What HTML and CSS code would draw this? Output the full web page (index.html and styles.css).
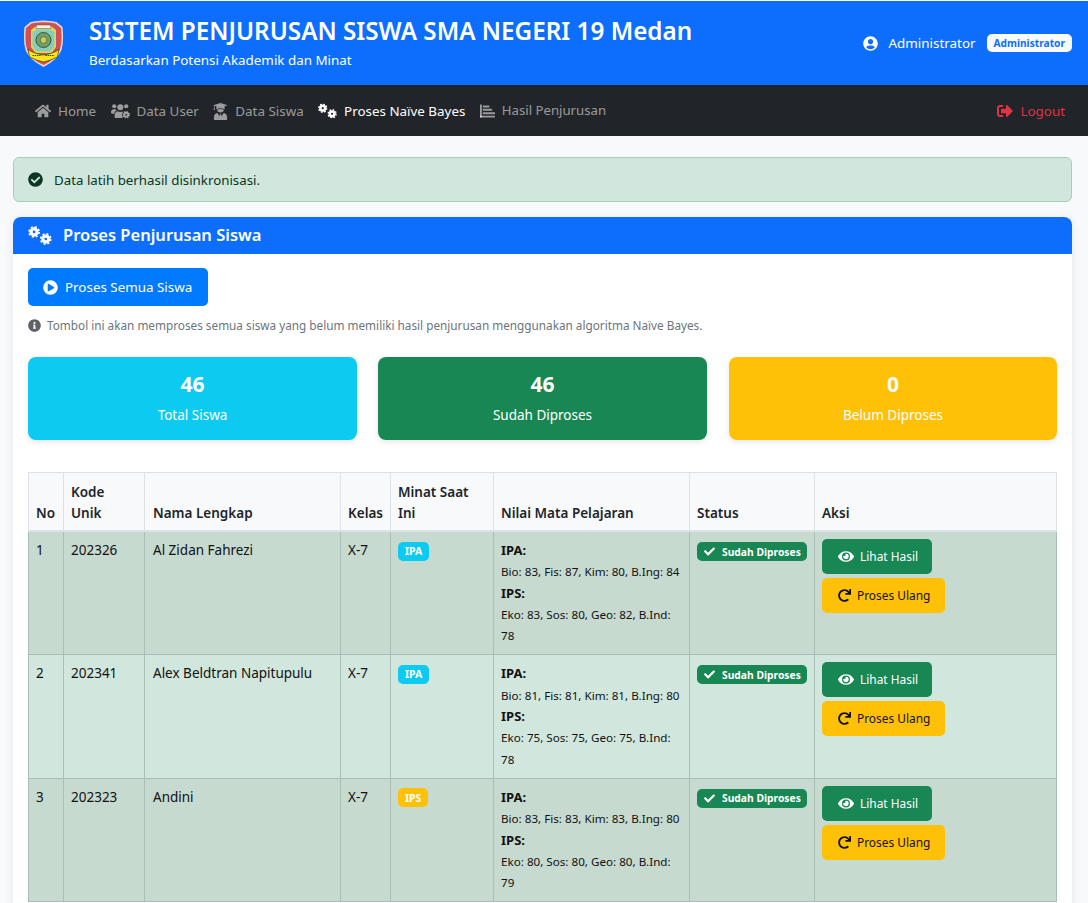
FILE: index.html
```html
<!DOCTYPE html>
<html lang="id">
<head>
<meta charset="utf-8">
<title>Sistem Penjurusan Siswa</title>
<link rel="stylesheet" href="styles.css">
</head>
<body>
<svg class="defs" width="0" height="0" aria-hidden="true">
  <defs>
    <symbol id="gear" viewBox="0 0 24 24">
      <circle cx="12" cy="12" r="6" fill="none" stroke="currentColor" stroke-width="6.5" />
      <circle cx="12" cy="12" r="10.2" fill="none" stroke="currentColor" stroke-width="3.6" stroke-dasharray="4.2 3.81" />
    </symbol>
    <symbol id="cogs" viewBox="0 0 640 512">
      <use href="#gear" x="0" y="0" width="320" height="320" />
      <use href="#gear" x="315" y="190" width="320" height="320" />
    </symbol>
    <symbol id="check" viewBox="0 0 512 512"><path fill="currentColor" d="M173.898 439.404l-166.4-166.4c-9.997-9.997-9.997-26.206 0-36.204l36.203-36.204c9.997-9.998 26.207-9.998 36.204 0L192 312.69 432.095 72.596c9.997-9.997 26.207-9.997 36.204 0l36.203 36.204c9.997 9.997 9.997 26.206 0 36.204l-294.4 294.401c-9.998 9.997-26.207 9.997-36.204-.001z"/></symbol>
    <symbol id="eye" viewBox="0 0 576 512"><path fill="currentColor" d="M572.52 241.4C518.29 135.59 410.93 64 288 64S57.68 135.64 3.48 241.41a32.35 32.35 0 0 0 0 29.19C57.71 376.41 165.07 448 288 448s230.32-71.64 284.52-177.41a32.35 32.35 0 0 0 0-29.19zM288 400a144 144 0 1 1 144-144 143.93 143.93 0 0 1-144 144zm0-240a95.31 95.31 0 0 0-25.31 3.79 47.85 47.85 0 0 1-66.9 66.9A95.78 95.78 0 1 0 288 160z"/></symbol>
    <symbol id="redo" viewBox="0 0 512 512"><path fill="currentColor" d="M500.33 0h-47.41a12 12 0 0 0-12 12.57l4 82.76A247.42 247.42 0 0 0 256 8C119.34 8 7.9 119.53 8 256.19 8.1 393.07 119.1 504 256 504a247.1 247.1 0 0 0 166.18-63.91 12 12 0 0 0 .48-17.43l-34-34a12 12 0 0 0-16.38-.55A176 176 0 1 1 402.1 157.8l-101.53-4.87a12 12 0 0 0-12.57 12v47.41a12 12 0 0 0 12 12h200.33a12 12 0 0 0 12-12V12a12 12 0 0 0-12-12z"/></symbol>
  </defs>
</svg>

<header class="topbar">
  <div class="brand">
    <svg class="logo" viewBox="0 0 40 47" aria-hidden="true">
      <path d="M7 2 Q20 -1 33 2 L39 7 Q40.5 22 38 30 Q34 40 20 47 Q6 40 2 30 Q-.5 22 1 7Z" fill="#e9d3d6"/>
      <path d="M8 3.5 Q20 1 32 3.5 L37.5 8 Q39 22 36.5 29 Q33 39 20 45 Q7 39 3.5 29 Q1 22 2.5 8Z" fill="#d2504f"/>
      <path d="M12 6.5 H28 L32.5 10 V27 L28 33 H12 L7.5 27 V10Z" fill="#e3d94a"/>
      <path d="M13 9.5 H27 L31 12 V26 L27 31.5 H13 L9 26 V12Z" fill="#86cdbd"/>
      <path d="M13 5 H27 L27.5 8.5 H12.5Z" fill="#f6f1e4" stroke="#5a5a30" stroke-width=".5"/>
      <circle cx="20" cy="20" r="7.5" fill="#74a063" stroke="#33593f" stroke-width="1"/>
      <circle cx="20" cy="20" r="3.4" fill="#cdc95a" stroke="#33593f" stroke-width=".7"/>
      <path d="M4.5 29 Q8 33 20 35 Q32 33 35.5 29 L34 37 Q26 41 20 42 Q14 41 6 37Z" fill="#f6e61a" stroke="#3e3a10" stroke-width=".7"/>
      <path d="M9 35.5 H18 M22 35.5 H31" stroke="#3e3a10" stroke-width="1.2" stroke-dasharray="1.4 .8"/>
    </svg>
    <div class="brand-text">
      <h1 class="brand-title">SISTEM PENJURUSAN SISWA SMA NEGERI 19 Medan</h1>
      <p class="brand-sub">Berdasarkan Potensi Akademik dan Minat</p>
    </div>
  </div>
  <div class="user">
    <svg class="ico ico-user" viewBox="0 0 496 512" aria-hidden="true"><path fill="currentColor" d="M248 8C111 8 0 119 0 256s111 248 248 248 248-111 248-248S385 8 248 8zm0 96c48.6 0 88 39.4 88 88s-39.4 88-88 88-88-39.4-88-88 39.4-88 88-88zm0 344c-58.7 0-111.3-26.6-146.5-68.2 18.8-35.4 55.6-59.8 98.5-59.8 2.4 0 4.8.4 7.1 1.1 13 4.2 26.6 6.9 40.9 6.9 14.3 0 28-2.7 40.9-6.9 2.3-.7 4.7-1.1 7.1-1.1 42.9 0 79.7 24.4 98.5 59.8C359.3 421.4 306.7 448 248 448z"/></svg>
    <span class="user-name">Administrator</span>
    <span class="user-badge">Administrator</span>
  </div>
</header>

<nav class="navbar">
  <ul class="nav-list">
    <li><a class="nav-link"><svg class="ico" viewBox="0 0 576 512" aria-hidden="true"><path fill="currentColor" d="M280.37 148.26L96 300.11V464a16 16 0 0 0 16 16l112.06-.29a16 16 0 0 0 15.92-16V368a16 16 0 0 1 16-16h64a16 16 0 0 1 16 16v95.64a16 16 0 0 0 16 16.05L464 480a16 16 0 0 0 16-16V300L295.67 148.26a12.19 12.19 0 0 0-15.3 0zM571.6 251.47L488 182.56V44.05a12 12 0 0 0-12-12h-56a12 12 0 0 0-12 12v72.61L318.47 43a48 48 0 0 0-61 0L4.34 251.47a12 12 0 0 0-1.6 16.9l25.5 31A12 12 0 0 0 45.15 301l235.22-193.74a12.19 12.19 0 0 1 15.3 0L530.9 301a12 12 0 0 0 16.9-1.6l25.5-31a12 12 0 0 0-1.7-16.93z"/></svg>Home</a></li>
    <li><a class="nav-link"><svg class="ico ico-users" viewBox="0 0 20 16" aria-hidden="true"><g fill="currentColor"><circle cx="3.4" cy="3" r="2.2"/><circle cx="16" cy="3" r="2.2"/><circle cx="9.8" cy="4" r="3.2"/><path d="M0 9.6q0-3.4 3-3.4h1.6q1 .4 1.4 1Q3.6 8.4 3.4 10.8H1q-1 0-1-1.2zM4.8 15.4q-1 0-1-1v-1.6q0-4 3.2-4.6 2.8 1.4 5.4.3v1.4q-1.6 1.6-.2 3.8v1.7z"/></g><use href="#gear" x="12" y="8" width="8" height="8"/></svg>Data User</a></li>
    <li><a class="nav-link"><svg class="ico ico-grad" viewBox="0 0 16 18" aria-hidden="true"><g fill="currentColor"><path d="M8 0 15.6 2.4 12.4 3.4V6.6Q10.6 5.4 8 5.4T3.6 6.6V3.4L1.6 2.8V5L2.2 7H.4L1 5V2.5L.4 2.4z"/><path d="M4.4 6.8Q8 5.7 11.6 6.8 11.4 10 8 10T4.4 6.8z"/><path d="M1 18v-3q0-3.6 3.6-4.4L7 14l.5-2.5h1L9 14l2.4-3.4Q15 11.4 15 15v3z"/></g></svg>Data Siswa</a></li>
    <li><a class="nav-link nav-active"><svg class="ico ico-cogs" aria-hidden="true"><use href="#cogs"/></svg>Proses Naïve Bayes</a></li>
    <li><a class="nav-link nav-hasil"><svg class="ico ico-chart" viewBox="0 0 16 14" aria-hidden="true"><g fill="currentColor"><rect x="0" y="0" width="2" height="14" rx=".4"/><rect x="0" y="12" width="16" height="2" rx=".4"/><rect x="3" y="1" width="7" height="2.2" rx=".3"/><rect x="3" y="4.6" width="10" height="2.2" rx=".3"/><rect x="3" y="8.2" width="13" height="2.2" rx=".3"/></g></svg>Hasil Penjurusan</a></li>
  </ul>
  <a class="nav-link nav-logout"><svg class="ico ico-out" viewBox="0 0 512 512" aria-hidden="true"><path fill="currentColor" d="M497 273L329 441c-15 15-41 4.5-41-17v-96H152c-13.3 0-24-10.7-24-24v-96c0-13.3 10.7-24 24-24h136V88c0-21.4 25.9-32 41-17l168 168c9.3 9.4 9.3 24.6 0 34zM192 436v-40c0-6.6-5.4-12-12-12H96c-17.7 0-32-14.3-32-32V160c0-17.7 14.3-32 32-32h84c6.6 0 12-5.4 12-12V76c0-6.6-5.4-12-12-12H96c-53 0-96 43-96 96v192c0 53 43 96 96 96h84c6.6 0 12-5.4 12-12z"/></svg>Logout</a>
</nav>

<main class="content">
  <div class="alert">
    <svg class="ico ico-alert" viewBox="0 0 512 512" aria-hidden="true"><path fill="currentColor" d="M504 256c0 136.967-111.033 248-248 248S8 392.967 8 256 119.033 8 256 8s248 111.033 248 248zM227.314 387.314l184-184c6.248-6.248 6.248-16.379 0-22.627l-22.627-22.627c-6.248-6.249-16.379-6.249-22.628 0L216 308.118l-70.059-70.059c-6.248-6.248-16.379-6.248-22.628 0l-22.627 22.627c-6.248 6.248-6.248 16.379 0 22.627l104 104c6.249 6.249 16.379 6.249 22.628.001z"/></svg>
    Data latih berhasil disinkronisasi.
  </div>

  <section class="card">
    <h2 class="card-head"><svg class="ico ico-head" aria-hidden="true"><use href="#cogs"/></svg>Proses Penjurusan Siswa</h2>
    <div class="card-body">
      <a class="btn btn-primary btn-big"><svg class="ico ico-play" viewBox="0 0 512 512" aria-hidden="true"><path fill="currentColor" d="M256 8C119 8 8 119 8 256s111 248 248 248 248-111 248-248S393 8 256 8zm115.7 272l-176 101c-15.8 8.8-35.7-2.5-35.7-21V152c0-18.4 19.8-29.8 35.7-21l176 107c16.4 9.2 16.4 32.9 0 42z"/></svg>Proses Semua Siswa</a>
      <p class="hint"><svg class="ico ico-info" viewBox="0 0 512 512" aria-hidden="true"><path fill="currentColor" d="M256 8C119.043 8 8 119.083 8 256c0 136.997 111.043 248 248 248s248-111.003 248-248C504 119.083 392.957 8 256 8zm0 110c23.196 0 42 18.804 42 42s-18.804 42-42 42-42-18.804-42-42 18.804-42 42-42zm56 254c0 6.627-5.373 12-12 12h-88c-6.627 0-12-5.373-12-12v-24c0-6.627 5.373-12 12-12h12v-64h-12c-6.627 0-12-5.373-12-12v-24c0-6.627 5.373-12 12-12h64c6.627 0 12 5.373 12 12v100h12c6.627 0 12 5.373 12 12v24z"/></svg>Tombol ini akan memproses semua siswa yang belum memiliki hasil penjurusan menggunakan algoritma Naïve Bayes.</p>

      <div class="stats">
        <div class="stat stat-info"><strong class="stat-num">46</strong><span class="stat-label">Total Siswa</span></div>
        <div class="stat stat-success"><strong class="stat-num">46</strong><span class="stat-label">Sudah Diproses</span></div>
        <div class="stat stat-warning"><strong class="stat-num">0</strong><span class="stat-label">Belum Diproses</span></div>
      </div>

      <table class="table">
        <colgroup>
          <col class="c-no"><col class="c-kode"><col class="c-nama"><col class="c-kelas"><col class="c-minat"><col class="c-nilai"><col class="c-status"><col>
        </colgroup>
        <thead>
          <tr><th>No</th><th>Kode Unik</th><th>Nama Lengkap</th><th>Kelas</th><th>Minat Saat Ini</th><th>Nilai Mata Pelajaran</th><th>Status</th><th>Aksi</th></tr>
        </thead>
        <tbody>
          <tr>
            <td>1</td><td>202326</td><td>Al Zidan Fahrezi</td><td>X-7</td>
            <td><span class="tag tag-ipa">IPA</span></td>
            <td class="nilai"><strong>IPA:</strong><br><small>Bio: 83, Fis: 87, Kim: 80, B.Ing: 84</small><br><strong>IPS:</strong><br><small>Eko: 83, Sos: 80, Geo: 82, B.Ind: 78</small></td>
            <td><span class="tag tag-done"><svg class="ico ico-check" aria-hidden="true"><use href="#check"/></svg>Sudah Diproses</span></td>
            <td><a class="btn btn-success"><svg class="ico ico-eye" aria-hidden="true"><use href="#eye"/></svg>Lihat Hasil</a><a class="btn btn-warning"><svg class="ico ico-redo" aria-hidden="true"><use href="#redo"/></svg>Proses Ulang</a></td>
          </tr>
          <tr>
            <td>2</td><td>202341</td><td>Alex Beldtran Napitupulu</td><td>X-7</td>
            <td><span class="tag tag-ipa">IPA</span></td>
            <td class="nilai"><strong>IPA:</strong><br><small>Bio: 81, Fis: 81, Kim: 81, B.Ing: 80</small><br><strong>IPS:</strong><br><small>Eko: 75, Sos: 75, Geo: 75, B.Ind: 78</small></td>
            <td><span class="tag tag-done"><svg class="ico ico-check" aria-hidden="true"><use href="#check"/></svg>Sudah Diproses</span></td>
            <td><a class="btn btn-success"><svg class="ico ico-eye" aria-hidden="true"><use href="#eye"/></svg>Lihat Hasil</a><a class="btn btn-warning"><svg class="ico ico-redo" aria-hidden="true"><use href="#redo"/></svg>Proses Ulang</a></td>
          </tr>
          <tr>
            <td>3</td><td>202323</td><td>Andini</td><td>X-7</td>
            <td><span class="tag tag-ips">IPS</span></td>
            <td class="nilai"><strong>IPA:</strong><br><small>Bio: 83, Fis: 83, Kim: 83, B.Ing: 80</small><br><strong>IPS:</strong><br><small>Eko: 80, Sos: 80, Geo: 80, B.Ind: 79</small></td>
            <td><span class="tag tag-done"><svg class="ico ico-check" aria-hidden="true"><use href="#check"/></svg>Sudah Diproses</span></td>
            <td><a class="btn btn-success"><svg class="ico ico-eye" aria-hidden="true"><use href="#eye"/></svg>Lihat Hasil</a><a class="btn btn-warning"><svg class="ico ico-redo" aria-hidden="true"><use href="#redo"/></svg>Proses Ulang</a></td>
          </tr>
        </tbody>
      </table>
    </div>
  </section>
</main>
</body>
</html>
```

FILE: styles.css
```css
* { box-sizing: border-box; }
html, body { margin: 0; padding: 0; }
body {
  font-family: "Noto Sans", "Open Sans", sans-serif;
  font-size: 14px;
  line-height: 1.5;
  color: #212529;
  background: #f8f9fa;
  border-top: 1px solid #f8f9fa;
}
.defs { position: absolute; }
.ico { display: inline-block; width: 16px; height: 16px; vertical-align: -2px; flex: none; }

.topbar {
  height: 84px;
  background: #0d6efd;
  color: #fff;
  display: flex;
  justify-content: space-between;
  align-items: center;
  padding: 0 16px 0 23px;
}
.brand { display: flex; align-items: center; gap: 25px; }
.logo { width: 41px; height: 47px; margin-top: 1px; }
.brand-title { margin: 0; font-size: 24.25px; line-height: 34px; font-weight: 600; margin-top: -2px; }
.brand-sub { margin: 2px 0 0; font-size: 13.4px; line-height: 20px; }
.user { display: flex; align-items: center; margin-top: 1px; }
.ico-user { width: 15px; height: 15px; margin-right: 11px; }
.user-name { font-size: 13.4px; margin-right: 11px; }
.user-badge {
  background: #f8f9fa;
  color: #0d6efd;
  font-size: 10.2px;
  font-weight: 700;
  line-height: 12px;
  padding: 3px 7px;
  border-radius: 5px;
}

.navbar {
  height: 51px;
  background: #212529;
  display: flex;
  justify-content: space-between;
  align-items: center;
  padding: 2px 23px 0 35px;
}
.nav-list { display: flex; list-style: none; margin: 0; padding: 0; gap: 14.4px; }
.nav-link { display: flex; align-items: center; gap: 7px; color: rgba(255,255,255,.55); font-size: 13.4px; }
.nav-active { color: #fff; }
.nav-logout { color: #dc3545; }
.nav-hasil { font-size: 13.2px; }
.ico-users { width: 19px; height: 16px; }
.ico-grad { width: 15px; height: 17px; }
.ico-cogs { width: 19px; height: 16px; }
.ico-chart { width: 15px; height: 14px; }

.content { padding: 21px 16px 16px 13px; }
.alert {
  height: 45px;
  display: flex;
  align-items: center;
  gap: 11px;
  padding: 2px 14px 0;
  background: #d1e7dd;
  border: 1px solid #a3cfbb;
  border-radius: 6px;
  color: #0a3622;
  font-size: 13.3px;
  margin-bottom: 15px;
}
.ico-alert { width: 15px; height: 15px; margin-top: -2px; }

.card { background: #fff; border-radius: 8px; box-shadow: 0 2px 10px rgba(0,0,0,.08); }
.card-head {
  margin: 0;
  height: 37px;
  padding: 0 15px;
  display: flex;
  align-items: center;
  gap: 11px;
  background: #0d6efd;
  color: #fff;
  font-size: 16.5px;
  font-weight: 600;
  border-radius: 8px 8px 0 0;
}
.ico-head { width: 24px; height: 19px; }
.card-body { padding: 14px 15px 16px; }

.btn {
  display: inline-flex;
  align-items: center;
  gap: 6px;
  height: 35px;
  padding: 0 15px 0 16px;
  border-radius: 5px;
}
.btn-big { height: 38px; background: #007bff; color: #fff; font-size: 13.4px; padding: 0 15px; gap: 7px; width: 180px; }
.ico-play { width: 15px; height: 15px; }
.hint { margin: 10px 0 0; color: #6c757d; font-size: 11.75px; line-height: 18px; display: flex; align-items: center; gap: 6px; }
.ico-info { width: 13px; height: 13px; color: #5c6268; }

.stats { display: grid; grid-template-columns: 329px 329px 1fr; column-gap: 21px; margin: 23px 0 32px; }
.stat-warning { margin-left: 1px; }
.stat {
  height: 83px;
  border-radius: 8px;
  color: #fff;
  display: flex;
  flex-direction: column;
  align-items: center;
  padding-top: 12px;
  box-shadow: 0 2px 6px rgba(0,0,0,.1);
}
.stat-info { background: #0dcaf0; }
.stat-success { background: #198754; }
.stat-warning { background: #ffc107; }
.stat-num { font-size: 21px; line-height: 30px; font-weight: 700; }
.stat-label { font-size: 13.5px; line-height: 20px; margin-top: 6px; }

.table { width: 100%; border-collapse: collapse; table-layout: fixed; color: #212529; font-size: 13.5px; }
.c-no { width: 35px; }
.c-kode { width: 81px; }
.c-nama { width: 196px; }
.c-kelas { width: 50px; }
.c-minat { width: 103px; }
.c-nilai { width: 196px; }
.c-status { width: 125px; }
.table th {
  background: #f8f9fa;
  border: 1px solid #dee2e6;
  padding: 9px 7px 6px;
  text-align: left;
  vertical-align: bottom;
  font-weight: 600;
  line-height: 21px;
  border-bottom-width: 2px;
}
.table td {
  border: 1px solid #a9bfb5;
  padding: 8px 7px;
  vertical-align: top;
  background: #d1e7dd;
  color: #111;
  line-height: 21.3px;
}
.table th:nth-child(3), .table td:nth-child(3) { padding-left: 8px; }
.table tbody tr:nth-child(odd) td { background: #c7dad0; }
.nilai strong { font-weight: 700; font-size: 13px; }
.nilai small { font-size: 11.65px; }
.tag {
  display: inline-flex;
  align-items: center;
  gap: 7px;
  font-size: 10.5px;
  font-weight: 700;
  line-height: 12px;
  height: 19px;
  padding: 0 7px;
  border-radius: 5px;
  color: #fff;
  white-space: nowrap;
  vertical-align: 0;
}
.tag-ipa { background: #0dcaf0; }
.tag-ips { background: #ffc107; }
.tag-done { background: #198754; width: 110px; padding-right: 0; font-size: 10.3px; margin-top: 2px; }
.ico-check { width: 11px; height: 11px; }
.btn-success { background: #198754; color: #fff; font-size: 11.9px; margin-top: -1px; padding-right: 14px; }
.btn-warning { background: #ffc107; color: #111; font-size: 11.9px; margin-top: 4px; }
.ico-eye { width: 16px; height: 15px; }
.ico-redo { width: 13px; height: 13px; }
.table td .btn { display: flex; width: fit-content; }
```
